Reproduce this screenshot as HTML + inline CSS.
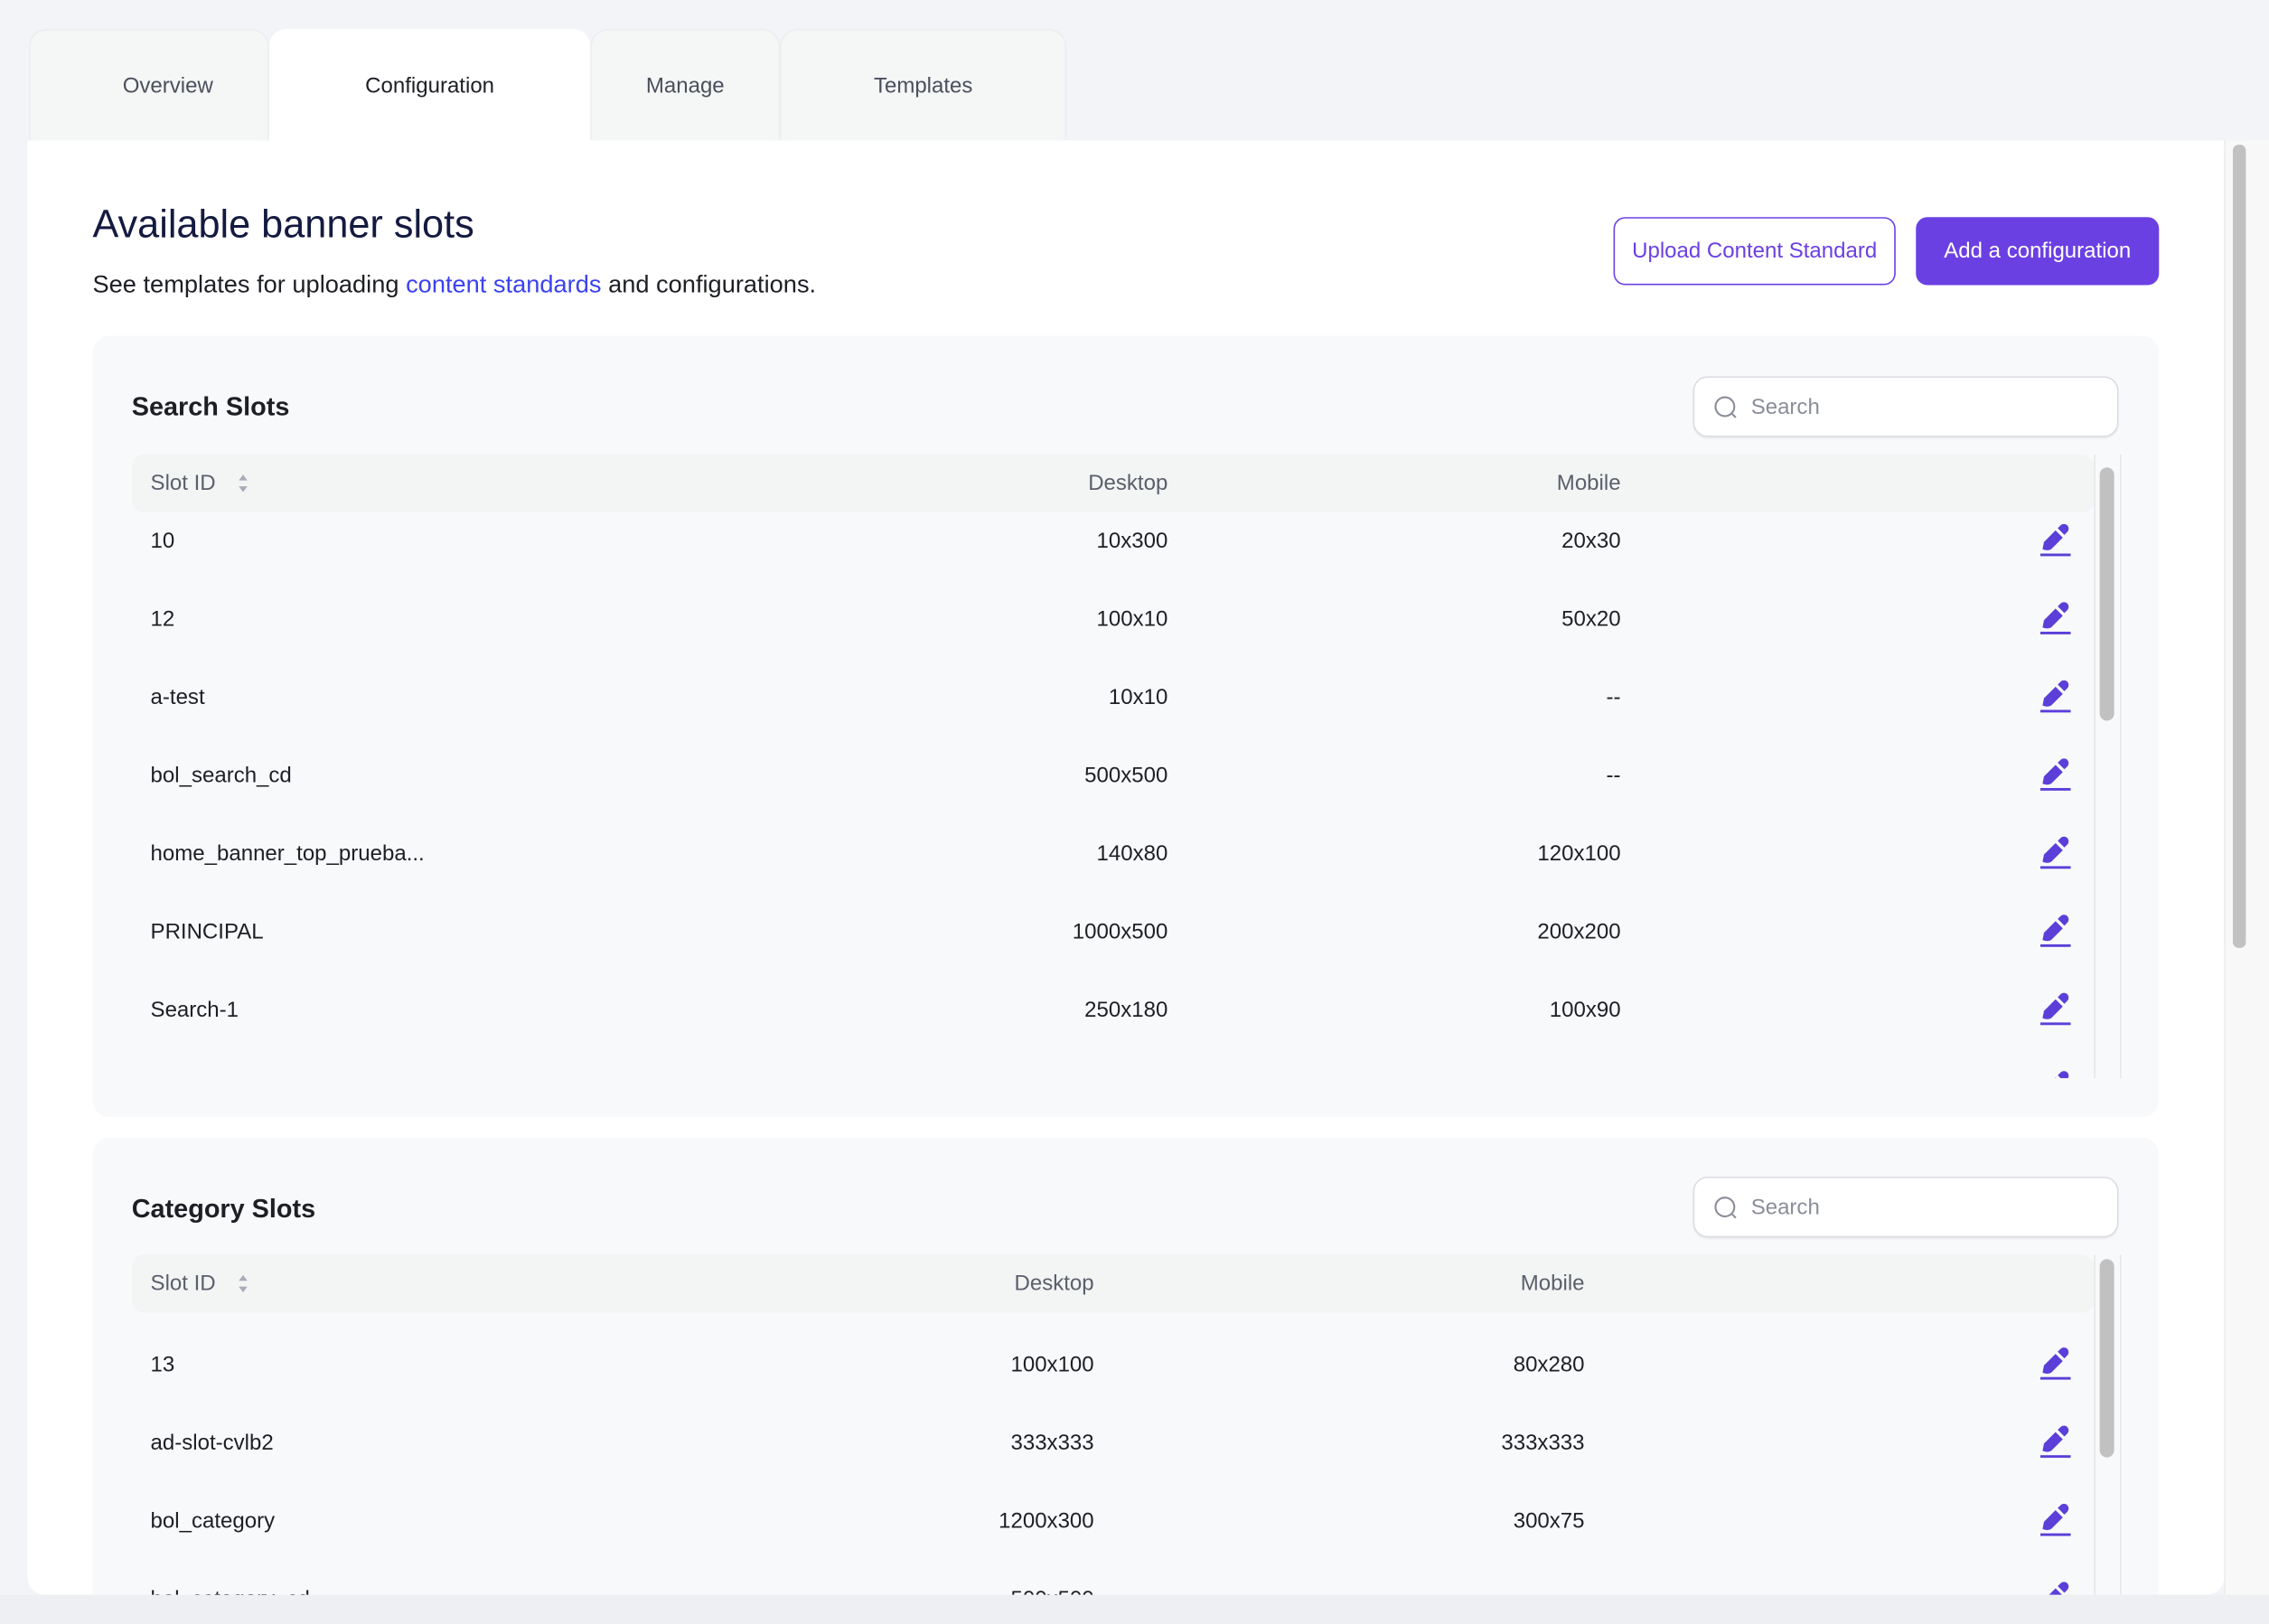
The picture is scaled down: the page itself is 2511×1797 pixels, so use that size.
<!DOCTYPE html>
<html><head><meta charset="utf-8"><style>
html,body{margin:0;padding:0;width:2511px;height:1796px;overflow:hidden;background:#f3f4f7;font-family:"Liberation Sans",sans-serif;}
#w{position:absolute;left:0;top:0;width:1568px;height:1122px;transform:scale(1.60140);transform-origin:0 0;}
.a{position:absolute;}
.tab{position:absolute;top:20px;height:77px;background:#f5f6f6;border:1px solid #ecedef;border-bottom:none;border-radius:12px 12px 0 0;box-sizing:border-box;font-size:15px;color:#4b4f5c;text-align:center;line-height:77px;}
.card{position:absolute;left:64px;width:1428px;background:#f8f9fb;border-radius:12px;overflow:hidden;}
.hdr{position:absolute;left:27px;width:1356px;height:40px;background:#f3f5f5;border-radius:8px;font-size:15px;color:#5b5f6b;}
.row{position:absolute;left:27px;width:1356px;height:54px;font-size:15px;color:#1d1f25;}
.row span,.hdr span{position:absolute;top:50%;transform:translateY(-50%);white-space:nowrap;}
.srch{position:absolute;left:1106px;width:294px;height:42px;background:#fff;border:1px solid #dcdde1;border-radius:10px;box-sizing:border-box;box-shadow:0 1px 1px rgba(0,0,0,.06);}
.srch span{position:absolute;left:39px;top:12px;font-size:15px;color:#8a8d99;}
.srch svg{position:absolute;left:13px;top:12px;}
.vl{position:absolute;width:1px;background:#e6e7ea;}
.th{position:absolute;width:10px;background:#c1c1c1;border-radius:5px;}
</style></head><body><div id="w">
<div class="tab" style="left:20px;width:166px;padding-left:26px">Overview</div>
<div class="tab" style="left:408px;width:131px">Manage</div>
<div class="tab" style="left:539px;width:198px">Templates</div>
<div class="tab" style="left:186px;width:222px;background:#fff;border-color:#fff;color:#1d1f25;height:80px">Configuration</div>
<div class="a" style="left:19px;top:97px;width:1518px;height:1005px;background:#fff;border-radius:0 0 12px 12px;overflow:hidden">
<div class="a" style="left:45px;top:43px;font-size:27px;color:#141a3f;white-space:nowrap">Available banner slots</div>
<div class="a" style="left:45px;top:90px;font-size:17px;color:#1d1f25;white-space:nowrap">See templates for uploading <span style="color:#3b42ee">content standards</span> and configurations.</div>
<div class="a" style="left:1096px;top:53px;width:195px;height:47px;border:1px solid #6b40e3;border-radius:8px;box-sizing:border-box;color:#6b40e3;font-size:15px;text-align:center;line-height:45px">Upload Content Standard</div>
<div class="a" style="left:1305px;top:53px;width:168px;height:47px;background:#6b40e3;border-radius:8px;color:#fff;font-size:15px;text-align:center;line-height:47px">Add a configuration</div>
</div>
<div class="a" style="left:1537px;top:97px;width:31px;height:1005px;background:#f8f8f8;border-left:1px solid #ececec"></div>
<div class="a" style="left:1543px;top:100px;width:9px;height:555px;background:#c1c1c1;border-radius:4px"></div>

<!-- Search card -->
<div class="card" style="top:232px;height:540px">
<div class="a" style="left:27px;top:39px;font-size:18px;font-weight:bold;color:#1d1f25">Search Slots</div>
<div class="srch" style="top:28px"><svg width="18" height="18" viewBox="0 0 18 18"><circle cx="8" cy="8" r="6.5" fill="none" stroke="#8a8d99" stroke-width="1.3"/><path d="M13 13l2.5 2.5" stroke="#8a8d99" stroke-width="1.3"/></svg><span>Search</span></div>
<div class="hdr" style="top:82px"><span style="left:13px">Slot ID</span><svg class="a" style="left:73px;top:13px" width="8" height="14" viewBox="0 0 8 14"><path d="M4 1L7 5H1Z M4 13L7 9H1Z" fill="#a9acb4"/></svg><span style="right:640px">Desktop</span><span style="right:327px">Mobile</span></div>
<div class="a" style="left:0;top:122px;width:1383px;height:391px;overflow:hidden">
<div id="r1" class="a" style="left:0;top:-7px;width:1383px"></div>
</div>
<div class="vl" style="left:1383px;top:82px;height:431px"></div><div class="vl" style="left:1401px;top:82px;height:431px"></div>
<div class="th" style="left:1387px;top:91px;height:175px"></div>
</div>

<!-- Category card -->
<div class="card" style="top:786px;height:316px;border-radius:12px 12px 0 0">
<div class="a" style="left:27px;top:39px;font-size:18px;font-weight:bold;color:#1d1f25">Category Slots</div>
<div class="srch" style="top:27px"><svg width="18" height="18" viewBox="0 0 18 18"><circle cx="8" cy="8" r="6.5" fill="none" stroke="#8a8d99" stroke-width="1.3"/><path d="M13 13l2.5 2.5" stroke="#8a8d99" stroke-width="1.3"/></svg><span>Search</span></div>
<div class="hdr" style="top:81px"><span style="left:13px">Slot ID</span><svg class="a" style="left:73px;top:13px" width="8" height="14" viewBox="0 0 8 14"><path d="M4 1L7 5H1Z M4 13L7 9H1Z" fill="#a9acb4"/></svg><span style="right:691px">Desktop</span><span style="right:352px">Mobile</span></div>
<div class="a" style="left:0;top:130px;width:1383px;height:300px;overflow:hidden"><div id="r2"></div></div>
<div class="vl" style="left:1383px;top:81px;height:300px"></div><div class="vl" style="left:1401px;top:81px;height:300px"></div>
<div class="th" style="left:1387px;top:84px;height:137px"></div>
</div>
<div class="a" style="left:0;top:1102px;width:1568px;height:20px;background:#eeeff2"></div>
</div>
<script>
var pen='<svg class="a" style="right:16px;top:15px" width="22" height="24" viewBox="0 0 22 24"><path d="M2.5 17.5 L3.5 12.5 L11.5 4.5 L16.5 9.5 L8.5 17.5 Q6 19 2.5 17.5 Z" fill="#5b3fd8"/><path d="M13 3 L15 1 A3.2 3.2 0 0 1 19.6 5.6 L17.6 7.6 Z" fill="#5b3fd8"/><rect x="1" y="20.5" width="21" height="1.8" fill="#5b3fd8"/></svg>';
function rows(id,data,d,m){var h='';data.forEach(function(r,i){h+='<div class="row" style="top:'+(i*54)+'px"><span style="left:13px">'+r[0]+'</span><span style="right:'+d+'px">'+r[1]+'</span><span style="right:'+m+'px">'+r[2]+'</span>'+pen+'</div>';});document.getElementById(id).innerHTML=h;}
rows('r1',[['10','10x300','20x30'],['12','100x10','50x20'],['a-test','10x10','--'],['bol_search_cd','500x500','--'],['home_banner_top_prueba...','140x80','120x100'],['PRINCIPAL','1000x500','200x200'],['Search-1','250x180','100x90'],['Search_slot_test','300x300','100x100']],640,327);
rows('r2',[['13','100x100','80x280'],['ad-slot-cvlb2','333x333','333x333'],['bol_category','1200x300','300x75'],['bol_category_cd','500x500','--']],691,352);
</script>
</body></html>
